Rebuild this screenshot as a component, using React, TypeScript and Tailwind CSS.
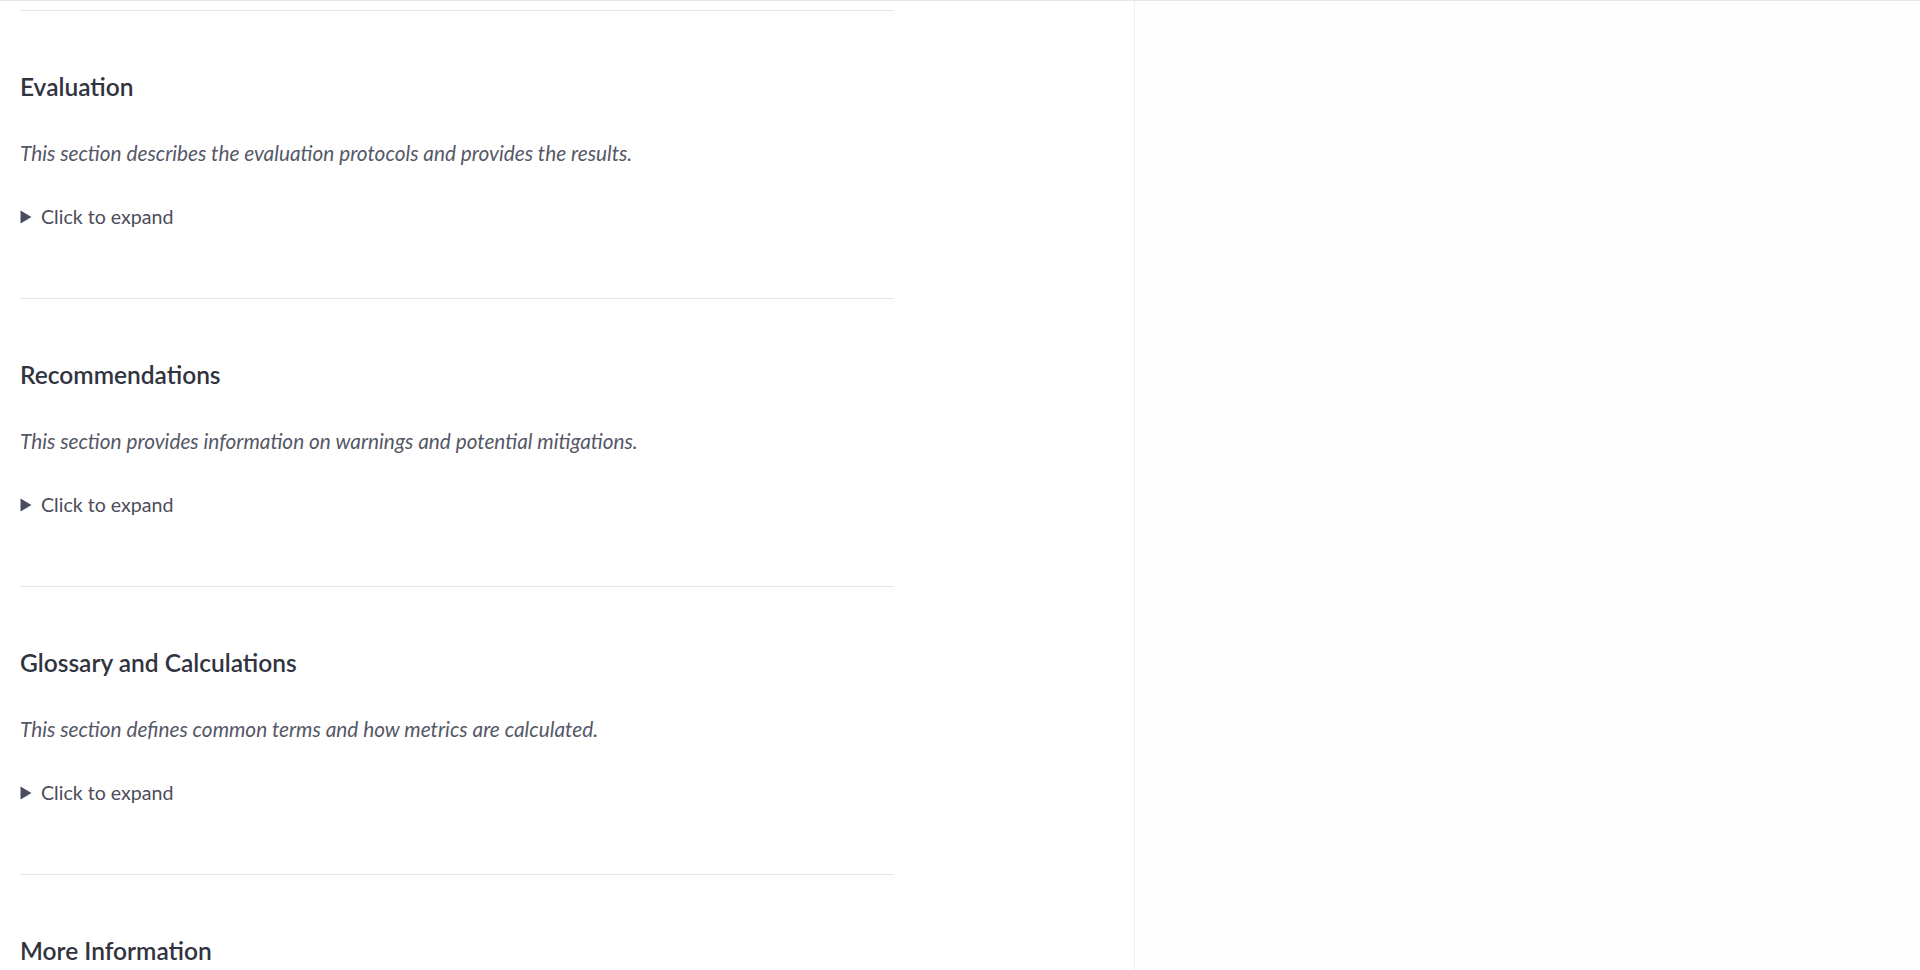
const sections = [
  {
    title: 'Evaluation',
    text: 'This section describes the evaluation protocols and provides the results.',
  },
  {
    title: 'Recommendations',
    text: 'This section provides information on warnings and potential mitigations.',
  },
  {
    title: 'Glossary and Calculations',
    text: 'This section defines common terms and how metrics are calculated.',
  },
]

function Section({ title, text }: { title: string; text: string }) {
  return (
    <section className="border-t border-[#e6e6e8] pt-[60px] pb-[67px]">
      <h3 className="text-[24.5px] leading-[32px] font-semibold text-[#31333f]">{title}</h3>
      <p className="mt-[36px] text-[20.8px] leading-[28px] italic text-[#555867]">{text}</p>
      <div className="mt-[36px] flex items-center gap-[9px] text-[19.6px] leading-[28px] text-[#4b4d5a]">
        <svg width="12" height="14" viewBox="0 0 12 14" className="shrink-0">
          <path d="M0.5 0.5 L11.5 7 L0.5 13.5 Z" fill="#4a4d5c" />
        </svg>
        <span>Click to expand</span>
      </div>
    </section>
  )
}

export default function App() {
  return (
    <div
      className="h-[970px] overflow-hidden bg-white border-t border-[#e6e6e6] flex"
      style={{ fontFamily: 'Lato, "Liberation Sans", sans-serif' }}
    >
      <main className="w-[1134px] shrink-0 pl-[20px] pt-[9px]">
        <div className="w-[874px]">
          {sections.map((s) => (
            <Section key={s.title} title={s.title} text={s.text} />
          ))}
          <section className="border-t border-[#e6e6e8] pt-[60px]">
            <h3 className="text-[24.5px] leading-[32px] font-semibold text-[#31333f]">
              More Information
            </h3>
          </section>
        </div>
      </main>
      <aside className="flex-1 border-l border-[#f0f0f2] bg-[#fefefe]" />
    </div>
  )
}
